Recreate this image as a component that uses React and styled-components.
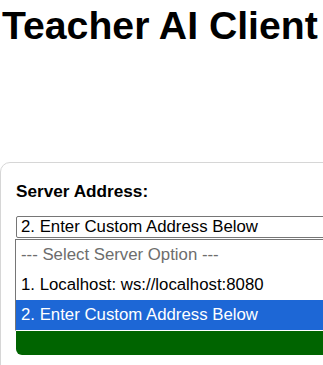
import React from "react";
import styled, { createGlobalStyle } from "styled-components";

const GlobalStyle = createGlobalStyle`
  html, body {
    margin: 0;
    padding: 0;
    background: #fff;
    overflow: hidden;
  }
  body {
    font-family: "Liberation Sans", Arial, sans-serif;
    color: #000;
  }
`;

const Page = styled.div`
  width: 380px;
  padding-top: 4px;
`;

const Title = styled.h1`
  margin: 0 0 115px 2px;
  font-size: 39.2px;
  line-height: 43px;
  font-weight: bold;
  white-space: nowrap;
`;

const Card = styled.div`
  border: 1px solid #d6d6d6;
  border-radius: 10px;
  padding: 18px 0 20px 15px;
`;

const Label = styled.label`
  display: block;
  font-size: 17.2px;
  font-weight: bold;
  line-height: 20px;
  margin-bottom: 15px;
`;

const SelectWrap = styled.div`
  position: relative;
`;

const SelectBox = styled.div`
  box-sizing: border-box;
  height: 22px;
  border: 1px solid #767676;
  border-radius: 2px;
  padding: 0 4px;
  font-size: 16.8px;
  line-height: 19px;
  white-space: nowrap;
`;

const OptionList = styled.ul`
  position: absolute;
  top: 23px;
  left: -1px;
  right: -20px;
  margin: 0;
  padding: 0;
  list-style: none;
  background: #fff;
  border: 1px solid #767676;
  border-bottom-color: #fff;
  z-index: 2;
`;

const Option = styled.li`
  height: 30px;
  line-height: 30px;
  padding: 0 5px;
  font-size: 16.8px;
  white-space: nowrap;
  color: ${(p) => (p.$selected ? "#fff" : p.$placeholder ? "#6d6d6d" : "#000")};
  background: ${(p) => (p.$selected ? "#1d67d6" : "transparent")};
`;

const AddressInput = styled.input`
  display: block;
  box-sizing: border-box;
  width: 100%;
  height: 32px;
  margin-top: 12px;
  border: 1px solid #ccc;
  border-radius: 5px;
  font-family: inherit;
  font-size: 16.8px;
`;

const ConnectButton = styled.button`
  display: block;
  box-sizing: border-box;
  width: 100%;
  height: 61px;
  margin-top: 12px;
  border: none;
  border-radius: 6px;
  background: #006400;
  cursor: pointer;
`;

export default function App() {
  return (
    <>
      <GlobalStyle />
      <Page>
        <Title>Teacher AI Client</Title>
        <Card>
          <Label>Server Address:</Label>
          <SelectWrap>
            <SelectBox>2. Enter Custom Address Below</SelectBox>
            <OptionList>
              <Option $placeholder>--- Select Server Option ---</Option>
              <Option>1. Localhost: ws://localhost:8080</Option>
              <Option $selected>2. Enter Custom Address Below</Option>
            </OptionList>
          </SelectWrap>
          <AddressInput aria-label="Custom address" />
          <ConnectButton aria-label="Connect" />
        </Card>
      </Page>
    </>
  );
}
